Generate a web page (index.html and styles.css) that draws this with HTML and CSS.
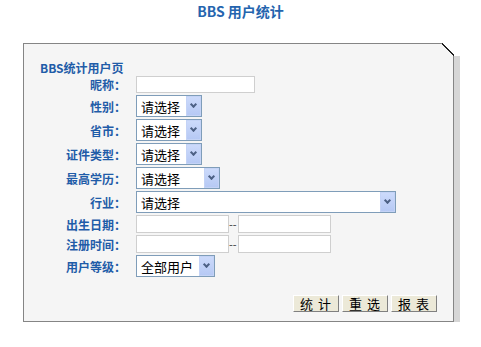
FILE: index.html
```html
<!DOCTYPE html>
<html lang="zh-CN">
<head>
  <meta charset="UTF-8" />
  <title>BBS 用户统计</title>
  <link rel="stylesheet" href="styles.css">
</head>
<body>
  <h2 class="titel">BBS 用户统计</h2>
  <div class="kader">
    <div class="kop">BBS统计用户页</div>
    <form class="rijen">
      <label>昵称：</label>
      <div><input type="text" class="tekst naam" /></div>

      <label>性别：</label>
      <div><span class="sel"><select class="kort"><option>请选择</option><option>男</option><option>女</option></select></span></div>

      <label>省市：</label>
      <div><span class="sel"><select class="kort"><option>请选择</option></select></span></div>

      <label>证件类型：</label>
      <div><span class="sel"><select class="kort"><option>请选择</option></select></span></div>

      <label>最高学历：</label>
      <div><span class="sel"><select class="middel"><option>请选择</option></select></span></div>

      <label>行业：</label>
      <div><span class="sel"><select class="lang"><option>请选择</option></select></span></div>

      <label>出生日期：</label>
      <div class="bereik"><input type="text" class="tekst datum" /><span class="streep">--</span><input type="text" class="tekst datum" /></div>

      <label>注册时间：</label>
      <div class="bereik"><input type="text" class="tekst datum" /><span class="streep">--</span><input type="text" class="tekst datum" /></div>

      <label>用户等级：</label>
      <div><span class="sel"><select class="niveau"><option>全部用户</option></select></span></div>
    </form>
    <div class="knoppen">
      <button type="button">统 计</button>
      <button type="button">重 选</button>
      <button type="button">报 表</button>
    </div>
  </div>
</body>
</html>
```

FILE: styles.css
```css
body {
  margin: 0;
  background: #fff;
  font-family: "Noto Sans CJK SC", "DejaVu Sans", sans-serif;
  font-size: 12px;
}
.titel {
  margin: 0;
  padding-top: 3px;
  height: 40px;
  line-height: 16px;
  text-align: center;
  font-size: 14px;
  font-weight: bold;
  color: #2464ae;
}
.kader {
  position: relative;
  margin-left: 23px;
  width: 397px;
  padding: 16px 16px 9px 16px;
  background: #f5f5f5;
  border: 1px solid #858585;
  box-shadow: 6px 5px 0 #d6d6d6;
}
.kader::before {
  content: "";
  position: absolute;
  top: -1px;
  right: -1px;
  width: 12px;
  height: 13px;
  background: linear-gradient(to bottom left, #fff 0 46%, #222 46% 54%, transparent 54%);
}
.kader::after {
  content: "";
  position: absolute;
  top: 4px;
  right: -8px;
  width: 7px;
  height: 8px;
  background: #fff;
}
.kop {
  height: 15px;
  line-height: 15px;
  font-weight: bold;
  color: #1f5ca8;
  margin-bottom: 1px;
}
.rijen {
  display: grid;
  grid-template-columns: 86px 1fr;
  column-gap: 10px;
  row-gap: 2px;
  margin: 0;
}
.rijen label {
  display: flex;
  align-items: center;
  justify-content: flex-end;
  font-weight: bold;
  color: #1f5ca8;
}
.rijen > div {
  display: flex;
  align-items: center;
}
.tekst {
  box-sizing: border-box;
  height: 18px;
  margin: 0;
  padding: 0 3px;
  border: 1px solid #cfcfcf;
  background: #fff;
}
.naam {
  width: 119px;
  height: 17px;
}
.datum {
  width: 93px;
}
.streep {
  width: 9px;
  font-size: 11px;
  line-height: 10px;
  color: #333;
}
.sel {
  position: relative;
  display: inline-block;
}
.sel select {
  appearance: none;
  box-sizing: border-box;
  height: 22px;
  margin: 0;
  padding: 0 0 0 4px;
  border: 1px solid #7f9db9;
  background: #fff;
  font-family: "Noto Sans CJK SC", sans-serif;
  font-size: 13px;
  color: #000;
  display: block;
}
.sel::after {
  content: "";
  position: absolute;
  top: 1px;
  right: 1px;
  bottom: 1px;
  width: 15px;
  background: linear-gradient(#cddbfb, #b5c8f4);
  box-shadow: inset 0 0 0 1px #c4d3f6;
  pointer-events: none;
}
.sel::before {
  content: "";
  position: absolute;
  z-index: 1;
  top: 7px;
  right: 6px;
  width: 3px;
  height: 3px;
  border-right: 2px solid #4d6185;
  border-bottom: 2px solid #4d6185;
  transform: rotate(45deg);
  pointer-events: none;
}
.kort {
  width: 66px;
}
.middel {
  width: 84px;
}
.lang {
  width: 260px;
}
.niveau {
  width: 79px;
}
.knoppen {
  display: flex;
  justify-content: flex-end;
  gap: 3px;
  margin-top: 18px;
}
.knoppen button {
  width: 46px;
  height: 17px;
  padding: 0;
  font-family: "Noto Sans CJK SC", sans-serif;
  font-size: 13px;
  line-height: 13px;
  letter-spacing: 1px;
  color: #000;
  background: #ece9d8;
  border: 1px solid;
  border-color: #fff #808080 #808080 #fff;
}
```
